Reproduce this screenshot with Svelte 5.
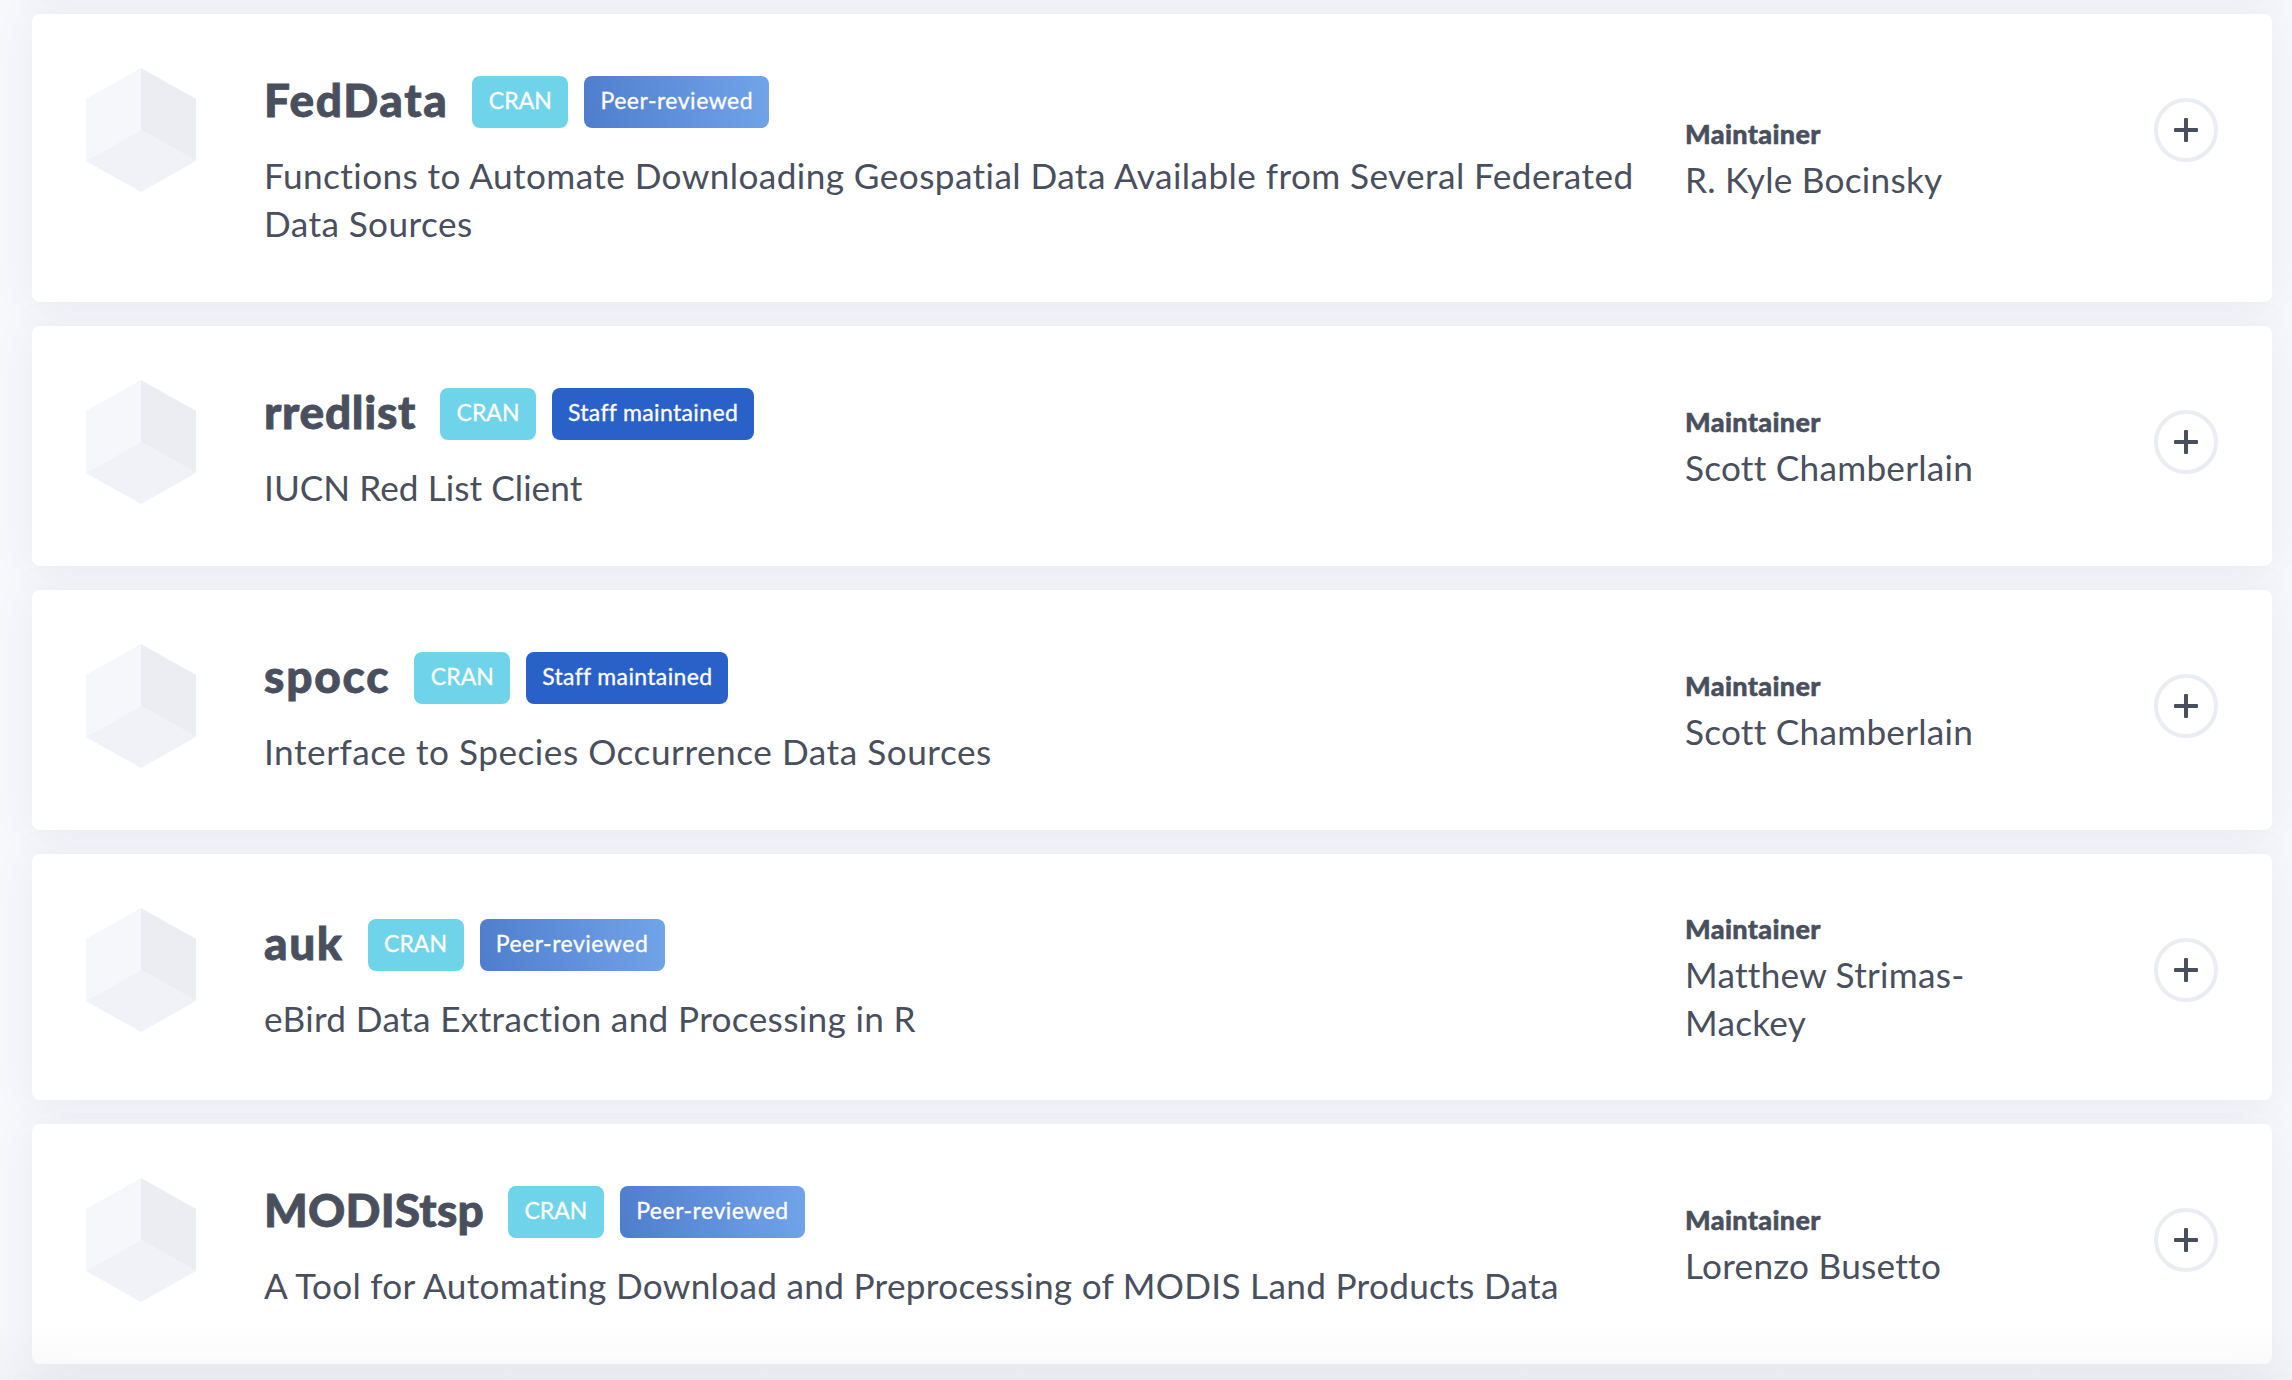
<script>
  // titleTracking / textTracking are letter-spacing values in pixels
  const packages = [
    { name: 'FedData', status: 'peer', description: 'Functions to Automate Downloading Geospatial Data Available from Several Federated Data Sources', maintainer: 'R. Kyle Bocinsky', titleTracking: 1.6, textTracking: 0.41 },
    { name: 'rredlist', status: 'staff', description: 'IUCN Red List Client', maintainer: 'Scott Chamberlain', titleTracking: 0.7, textTracking: 0.04 },
    { name: 'spocc', status: 'staff', description: 'Interface to Species Occurrence Data Sources', maintainer: 'Scott Chamberlain', titleTracking: 1.8, textTracking: 0.52 },
    { name: 'auk', status: 'peer', description: 'eBird Data Extraction and Processing in R', maintainer: 'Matthew Strimas-Mackey', titleTracking: 1.6, textTracking: 0.34 },
    { name: 'MODIStsp', status: 'peer', description: 'A Tool for Automating Download and Preprocessing of MODIS Land Products Data', maintainer: 'Lorenzo Busetto', titleTracking: 0.2, textTracking: 0.29 }
  ];
  const statusLabels = { peer: 'Peer-reviewed', staff: 'Staff maintained' };
</script>

<main class="page">
  <div class="list">
    {#each packages as pkg}
      <article class="card">
        <svg class="cube" viewBox="0 0 110 124" aria-hidden="true">
          <path fill="#f6f7fb" d="M55 0 0 31v62l55-31z" />
          <path fill="#ecedf3" d="M55 0l55 31v62L55 62z" />
          <path fill="#f1f2f7" d="M55 62l55 31-55 31L0 93z" />
        </svg>
        <div class="info">
          <header class="heading">
            <h2 style:letter-spacing="{pkg.titleTracking}px">{pkg.name}</h2>
            <span class="badge cran">CRAN</span>
            <span class="badge {pkg.status}">{statusLabels[pkg.status]}</span>
          </header>
          <p style:letter-spacing="{pkg.textTracking}px">{pkg.description}</p>
        </div>
        <div class="maintainer">
          <h3>Maintainer</h3>
          <p>{pkg.maintainer}</p>
        </div>
        <button class="expand" aria-label="Show details">
          <svg viewBox="0 0 24 24" aria-hidden="true">
            <rect x="10" y="0" width="4" height="24" rx="1" />
            <rect x="0" y="10" width="24" height="4" rx="1" />
          </svg>
        </button>
      </article>
    {/each}
  </div>
  <div class="fade"></div>
</main>

<style>
  :global(body) {
    background: #f7f8fc;
  }
  .page {
    position: relative;
    height: 1380px;
    overflow: hidden;
    font-family: Lato, sans-serif;
    font-variant-ligatures: none;
    color: #4a4f5e;
  }
  .list {
    display: flex;
    flex-direction: column;
    gap: 24px;
    padding: 0 20px 0 32px;
    margin-top: -70px;
  }
  /* Neighbouring cards just outside the viewport */
  .list::before,
  .list::after {
    content: '';
    height: 60px;
    flex: none;
  }
  .card,
  .list::before,
  .list::after {
    background: #fff;
    border-radius: 8px;
    box-shadow: 0 4px 40px rgba(74, 79, 120, 0.08);
  }
  .card {
    display: flex;
    align-items: center;
    padding: 54px;
  }
  .cube {
    flex: none;
    width: 110px;
    height: 124px;
    margin-right: 68px;
    align-self: flex-start;
  }
  .info {
    flex: 1;
    padding: 8px 0 1px;
  }
  .heading {
    display: flex;
    align-items: flex-start;
    margin-bottom: 23px;
  }
  h2,
  h3,
  p {
    margin: 0;
  }
  h2 {
    font-size: 46px;
    line-height: 47px;
    font-weight: 900;
    margin-right: 24px;
    -webkit-text-stroke: 0.8px currentColor;
  }
  .badge {
    box-sizing: border-box;
    height: 52px;
    border-radius: 8px;
    color: #fff;
    font-size: 23px;
    line-height: 48px;
    text-align: center;
    white-space: nowrap;
    -webkit-text-stroke: 0.3px currentColor;
  }
  .badge + .badge {
    margin-left: 16px;
  }
  .cran {
    width: 96px;
    background: #6fd3e9;
  }
  .staff {
    width: 202px;
    letter-spacing: 0.35px;
    background: #2a61c9;
  }
  .peer {
    width: 185px;
    letter-spacing: 0.5px;
    background: linear-gradient(80deg, #4f7dcd, #72a4e9);
  }
  .info p,
  .maintainer p {
    font-size: 35.2px;
    line-height: 48px;
  }
  .maintainer {
    width: 299px;
    margin-left: 45px;
  }
  .maintainer p {
    letter-spacing: 0.25px;
  }
  h3 {
    font-size: 27px;
    line-height: 41px;
    font-weight: 900;
    letter-spacing: 0.35px;
    margin-bottom: 1px;
    -webkit-text-stroke: 0.5px currentColor;
  }
  .expand {
    flex: none;
    align-self: flex-start;
    display: grid;
    place-items: center;
    box-sizing: border-box;
    width: 64px;
    height: 64px;
    margin: 30px 0 0 170px;
    padding: 0;
    border: 4px solid #ecedf3;
    border-radius: 50%;
    background: none;
  }
  .expand svg {
    width: 24px;
    height: 24px;
    fill: #4a4f5e;
  }
  .fade {
    position: absolute;
    inset: auto 0 0;
    height: 56px;
    background: linear-gradient(rgba(60, 64, 70, 0), rgba(60, 64, 70, 0.035));
  }
</style>
